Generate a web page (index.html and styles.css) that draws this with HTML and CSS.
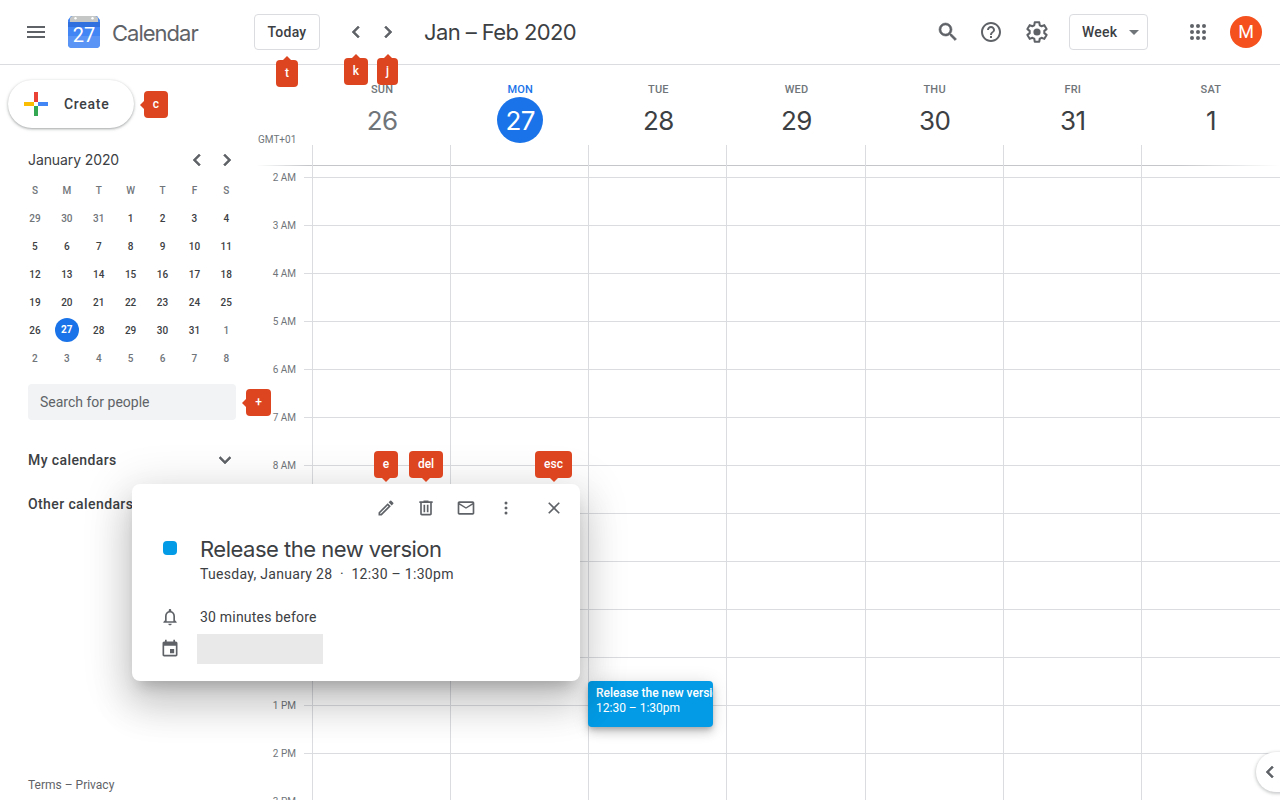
FILE: index.html
```html
<!DOCTYPE html>
<html lang="en">
<head>
    <meta charset="UTF-8">
    <meta name="viewport" content="width=device-width, initial-scale=1.0">
    <title>Calendar - Week of January 26, 2020</title>
    <link rel="stylesheet" href="styles.css">
</head>
<body>
    <header class="topbar">
        <div class="brand">
            <svg class="icon" viewBox="0 0 24 24"><path d="M3 18h18v-2H3v2zm0-5h18v-2H3v2zm0-7v2h18V6H3z"/></svg>
            <svg class="logo" viewBox="0 0 32 32">
                <path d="M3 0h26l3 4v24a4 4 0 0 1-4 4H4a4 4 0 0 1-4-4V4z" fill="#4285f4"/>
                <path d="M2 3a3 3 0 0 1 3-3h22a3 3 0 0 1 3 3v3H2z" fill="#c4c7c5"/>
                <path d="M0 6h32v5H0z" fill="#2f6fde"/>
                <path d="M0 20h32v8a4 4 0 0 1-4 4H4a4 4 0 0 1-4-4z" fill="#5a95f5"/>
                <circle cx="7.500" cy="2.200" r="1.200" fill="#fff"/>
                <circle cx="24.500" cy="2.200" r="1.200" fill="#fff"/>
                <text x="16" y="26" text-anchor="middle" class="logo-num">27</text>
            </svg>
            <span class="brand-name">Calendar</span>
        </div>
        <button class="btn btn-today">Today</button>
        <svg class="icon chev nav-prev" viewBox="0 0 24 24"><path d="M15.410 7.410L14 6l-6 6 6 6 1.410-1.410L10.830 12z"/></svg>
        <svg class="icon chev nav-next" viewBox="0 0 24 24"><path d="M10 6L8.590 7.410 13.170 12l-4.580 4.590L10 18l6-6z"/></svg>
        <h1 class="range">Jan – Feb 2020</h1>
        <div class="tools">
            <svg class="icon chev" viewBox="0 0 24 24"><path d="M15.500 14h-.79l-.28-.27A6.471 6.471 0 0 0 16 9.500 6.500 6.500 0 1 0 9.500 16c1.610 0 3.090-.59 4.230-1.570l.27.28v.79l5 4.990L20.490 19l-4.990-5zm-6 0C7.010 14 5 11.990 5 9.500S7.010 5 9.500 5 14 7.010 14 9.500 11.990 14 9.500 14z"/></svg>
            <svg class="icon tool-help" viewBox="0 0 24 24"><path d="M11 18h2v-2h-2v2zm1-16C6.480 2 2 6.480 2 12s4.480 10 10 10 10-4.480 10-10S17.520 2 12 2zm0 18c-4.410 0-8-3.590-8-8s3.590-8 8-8 8 3.590 8 8-3.590 8-8 8zm0-14c-2.210 0-4 1.790-4 4h2c0-1.100.9-2 2-2s2 .9 2 2c0 2-3 1.750-3 5h2c0-2.250 3-2.500 3-5 0-2.210-1.790-4-4-4z"/></svg>
            <svg class="icon tool-gear" viewBox="2.450 2 20 20">
                <path class="gear-line" d="M18.500 12.900c.05-.3.07-.6.07-.9s-.02-.6-.07-.9l1.950-1.520-1.900-3.280-2.300.93c-.48-.37-1-.67-1.560-.9L14.350 3.900h-3.800l-.34 2.430c-.56.23-1.080.53-1.560.9l-2.300-.93-1.900 3.280 1.950 1.520c-.05.3-.07.6-.07.9s.02.6.07.9l-1.950 1.520 1.900 3.280 2.300-.93c.48.37 1 .67 1.560.9l.34 2.430h3.800l.34-2.430c.56-.23 1.080-.53 1.560-.9l2.300.93 1.900-3.280z"/>
                <circle cx="12.450" cy="12" r="3"/>
            </svg>
            <button class="btn btn-week">Week<span class="caret"></span></button>
            <svg class="icon tool-apps" viewBox="0 0 24 24">
                <circle cx="6" cy="6" r="2"/><circle cx="12" cy="6" r="2"/><circle cx="18" cy="6" r="2"/>
                <circle cx="6" cy="12" r="2"/><circle cx="12" cy="12" r="2"/><circle cx="18" cy="12" r="2"/>
                <circle cx="6" cy="18" r="2"/><circle cx="12" cy="18" r="2"/><circle cx="18" cy="18" r="2"/>
            </svg>
            <div class="avatar">M</div>
        </div>
    </header>

    <main class="main">
        <aside class="sidebar">
            <button class="create">
                <svg class="create-plus" viewBox="0 0 24 24">
                    <path d="M10 0h4v10h-4z" fill="#ea4335"/>
                    <path d="M14 10h10v4H14z" fill="#4285f4"/>
                    <path d="M10 14h4v10h-4z" fill="#34a853"/>
                    <path d="M0 10h10v4H0z" fill="#fbbc04"/>
                </svg>
                Create
            </button>

            <div class="mini-head">
                <span class="mini-title">January 2020</span>
                <svg class="icon chev mini-nav" viewBox="0 0 24 24"><path d="M15.410 7.410L14 6l-6 6 6 6 1.410-1.410L10.830 12z"/></svg>
                <svg class="icon chev mini-nav mini-next" viewBox="0 0 24 24"><path d="M10 6L8.590 7.410 13.170 12l-4.580 4.590L10 18l6-6z"/></svg>
            </div>
            <div class="mini-grid">
                <span class="wd">S</span><span class="wd">M</span><span class="wd">T</span><span class="wd">W</span><span class="wd">T</span><span class="wd">F</span><span class="wd">S</span>
                <span class="out">29</span><span class="out">30</span><span class="out">31</span><span>1</span><span>2</span><span>3</span><span>4</span>
                <span>5</span><span>6</span><span>7</span><span>8</span><span>9</span><span>10</span><span>11</span>
                <span>12</span><span>13</span><span>14</span><span>15</span><span>16</span><span>17</span><span>18</span>
                <span>19</span><span>20</span><span>21</span><span>22</span><span>23</span><span>24</span><span>25</span>
                <span>26</span><span class="today"><b>27</b></span><span>28</span><span>29</span><span>30</span><span>31</span><span class="out">1</span>
                <span class="out">2</span><span class="out">3</span><span class="out">4</span><span class="out">5</span><span class="out">6</span><span class="out">7</span><span class="out">8</span>
            </div>

            <div class="people">Search for people</div>

            <div class="cal-section">
                <span>My calendars</span>
                <svg class="icon chev cal-toggle" viewBox="0 0 24 24"><path d="M16.590 8.590L12 13.170 7.410 8.590 6 10l6 6 6-6z"/></svg>
            </div>
            <div class="cal-section cal-other">
                <span>Other calendars</span>
            </div>

            <div class="terms">Terms – Privacy</div>
        </aside>

        <section class="week">
            <div class="week-head">
                <span class="gmt">GMT+01</span>
                <div class="day past"><span class="day-name">SUN</span><span class="day-num">26</span></div>
                <div class="day current"><span class="day-name">MON</span><span class="day-num">27</span></div>
                <div class="day"><span class="day-name">TUE</span><span class="day-num">28</span></div>
                <div class="day"><span class="day-name">WED</span><span class="day-num">29</span></div>
                <div class="day"><span class="day-name">THU</span><span class="day-num">30</span></div>
                <div class="day"><span class="day-name">FRI</span><span class="day-num">31</span></div>
                <div class="day"><span class="day-name">SAT</span><span class="day-num">1</span></div>
            </div>
            <div class="week-body">
                <div class="col-lines">
                    <i></i><i></i><i></i><i></i><i></i><i></i><i></i>
                </div>
                <div class="allday"></div>
                <div class="first-gap hour"><span>2 AM</span></div>
                <div class="hour"><span>3 AM</span></div>
                <div class="hour"><span>4 AM</span></div>
                <div class="hour"><span>5 AM</span></div>
                <div class="hour"><span>6 AM</span></div>
                <div class="hour"><span>7 AM</span></div>
                <div class="hour"><span>8 AM</span></div>
                <div class="hour"></div>
                <div class="hour"></div>
                <div class="hour"></div>
                <div class="hour"></div>
                <div class="hour"><span>1 PM</span></div>
                <div class="hour"><span>2 PM</span></div>
                <div class="hour"><span>3 PM</span></div>
            </div>
        </section>
    </main>

    <div class="event">
        <strong>Release the new version</strong>
        <span>12:30 – 1:30pm</span>
    </div>

    <div class="side-toggle">
        <svg class="icon chev" viewBox="0 0 24 24"><path d="M15.410 7.410L14 6l-6 6 6 6 1.410-1.410L10.830 12z"/></svg>
    </div>

    <div class="popup">
        <div class="popup-tools">
            <svg class="icon" viewBox="0 0 24 24"><path d="M3 17.250V21h3.750L17.810 9.940l-3.750-3.750L3 17.250zM5.920 19H5v-.92l9.060-9.060.92.92L5.920 19zM20.710 7.040a.996.996 0 0 0 0-1.410l-2.340-2.340a.996.996 0 0 0-1.410 0l-1.830 1.830 3.750 3.750 1.830-1.830z"/></svg>
            <svg class="icon" viewBox="0 0 24 24"><path d="M15 4V3H9v1H4v2h1v13c0 1.100.9 2 2 2h10c1.100 0 2-.9 2-2V6h1V4h-5zm2 15H7V6h10v13zM9 8h2v9H9V8zm4 0h2v9h-2V8z"/></svg>
            <svg class="icon" viewBox="0 0 24 24"><path d="M22 6c0-1.100-.9-2-2-2H4c-1.100 0-2 .9-2 2v12c0 1.100.9 2 2 2h16c1.100 0 2-.9 2-2V6zm-2 0l-8 5-8-5h16zm0 12H4V8l8 5 8-5v10z"/></svg>
            <svg class="icon" viewBox="0 0 24 24"><circle cx="12" cy="6" r="1.800"/><circle cx="12" cy="12" r="1.800"/><circle cx="12" cy="18" r="1.800"/></svg>
            <svg class="icon popup-close" viewBox="0 0 24 24"><path d="M19 6.410L17.590 5 12 10.590 6.410 5 5 6.410 10.590 12 5 17.590 6.410 19 12 13.410 17.590 19 19 17.590 13.410 12z"/></svg>
        </div>
        <div class="popup-row popup-title-row">
            <div class="popup-side"><span class="color-dot"></span></div>
            <div>
                <div class="popup-title">Release the new version</div>
                <div class="popup-when">Tuesday, January 28 &nbsp;·&nbsp; 12:30 – 1:30pm</div>
            </div>
        </div>
        <div class="popup-row popup-remind">
            <div class="popup-side">
                <svg class="icon" viewBox="0 0 24 24"><path d="M12 22c1.100 0 2-.9 2-2h-4c0 1.100.9 2 2 2zm6-6v-5c0-3.070-1.630-5.640-4.500-6.320V4c0-.83-.67-1.500-1.500-1.500s-1.500.67-1.500 1.500v.68C7.640 5.360 6 7.920 6 11v5l-2 2v1h16v-1l-2-2zm-2 1H8v-6c0-2.480 1.510-4.500 4-4.500s4 2.020 4 4.500v6z"/></svg>
            </div>
            <span>30 minutes before</span>
        </div>
        <div class="popup-row popup-cal">
            <div class="popup-side">
                <svg class="icon" viewBox="0 0 24 24"><path d="M17 12h-5v5h5v-5zM16 1v2H8V1H6v2H5c-1.110 0-1.990.9-1.990 2L3 19c0 1.100.89 2 2 2h14c1.100 0 2-.9 2-2V5c0-1.100-.9-2-2-2h-1V1h-2zm3 18H5V8h14v11z"/></svg>
            </div>
            <div class="redacted"></div>
        </div>
    </div>

    <!-- keyboard shortcut hints -->
    <span class="key up key-t">t</span>
    <span class="key up key-k">k</span>
    <span class="key up key-j">j</span>
    <span class="key left key-c">c</span>
    <span class="key left key-plus">+</span>
    <span class="key down key-e">e</span>
    <span class="key down key-del">del</span>
    <span class="key down key-esc">esc</span>
</body>
</html>
```

FILE: styles.css
```css
* {
    box-sizing: border-box;
}
html, body {
    margin: 0;
    height: 800px;
    overflow: hidden;
}
body {
    position: relative;
    font-family: Roboto, "Liberation Sans", sans-serif;
    font-size: 14px;
    color: #3c4043;
    background: #fff;
}
.icon {
    display: block;
    flex: none;
    width: 24px;
    height: 24px;
    fill: #5f6368;
}
.chev {
    stroke: #5f6368;
    stroke-width: .6;
}

/* top bar */
.topbar {
    display: flex;
    align-items: center;
    height: 65px;
    padding: 0 18px 0 24px;
    border-bottom: 1px solid #dadce0;
}
.brand {
    display: flex;
    align-items: center;
    width: 230px;
}
.logo {
    display: block;
    width: 32px;
    height: 32px;
    margin-left: 20px;
}
.logo-num {
    font-family: Roboto, sans-serif;
    font-size: 20px;
    fill: #fff;
}
.brand-name {
    margin: 1px 0 0 12px;
    font-family: Inter, sans-serif;
    font-size: 22px;
    letter-spacing: -1px;
    color: #5f6368;
}
.btn {
    height: 36px;
    background: #fff;
    border: 1px solid #dadce0;
    border-radius: 4px;
    font-family: Roboto, sans-serif;
    font-size: 14px;
    font-weight: 500;
    letter-spacing: .25px;
    color: #3c4043;
}
.btn-today {
    width: 66px;
    padding: 0;
}
.nav-prev {
    margin-left: 24px;
}
.nav-next {
    margin-left: 8px;
}
.range {
    margin: -1px 0 0 24px;
    font-family: Inter, sans-serif;
    font-size: 22px;
    font-weight: 400;
    letter-spacing: -.6px;
    color: #3c4043;
}
.tools {
    display: flex;
    align-items: center;
    margin-left: auto;
}
.tool-help {
    margin-left: 19px;
}
.tool-gear {
    margin-left: 22px;
}
.gear-line {
    fill: none;
    stroke: #5f6368;
    stroke-width: 1.700;
    stroke-linejoin: round;
}
.btn-week {
    display: flex;
    align-items: center;
    width: 79px;
    margin-left: 20px;
    padding: 0 0 0 12px;
}
.caret {
    margin-left: 12px;
    border-top: 5px solid #70757a;
    border-left: 5px solid transparent;
    border-right: 5px solid transparent;
}
.tool-apps {
    margin-left: 38px;
}
.avatar {
    width: 32px;
    height: 32px;
    margin-left: 20px;
    border-radius: 50%;
    background: #f4511e;
    color: #fff;
    font-size: 18px;
    line-height: 32px;
    text-align: center;
}

/* layout */
.main {
    display: flex;
    height: 735px;
    overflow: hidden;
}
.sidebar {
    display: flex;
    flex-direction: column;
    flex: none;
    width: 256px;
    padding: 15px 20px 7px 28px;
}
.create {
    display: flex;
    align-items: center;
    width: 126px;
    height: 48px;
    margin-left: -20px;
    padding: 0 0 0 16px;
    background: #fff;
    border: 0;
    border-radius: 24px;
    box-shadow: 0 1px 2px 0 rgba(60, 64, 67, .3), 0 1px 3px 1px rgba(60, 64, 67, .15);
    font-family: Roboto, sans-serif;
    font-size: 14px;
    font-weight: 500;
    letter-spacing: .7px;
    color: #3c4043;
}
.create-plus {
    width: 24px;
    height: 24px;
    margin-right: 16px;
}

/* mini month */
.mini-head {
    display: flex;
    align-items: center;
    height: 24px;
    margin-top: 20px;
}
.mini-title {
    flex: 1;
    margin-top: -2px;
    font-family: Inter, sans-serif;
    font-size: 14px;
    letter-spacing: -.1px;
}
.mini-next {
    margin: 0 -3px 0 6px;
}
.mini-grid {
    display: grid;
    grid-template-columns: repeat(7, 31.900px);
    grid-auto-rows: 28px;
    margin: 4px 0 0 -9px;
    font-size: 10px;
    font-weight: 500;
    color: #3c4043;
}
.mini-grid span {
    display: flex;
    align-items: center;
    justify-content: center;
}
.mini-grid .wd, .mini-grid .out {
    color: #70757a;
}
.mini-grid b {
    width: 24px;
    height: 24px;
    border-radius: 50%;
    background: #1a73e8;
    color: #fff;
    font-weight: 700;
    line-height: 24px;
    text-align: center;
}
.people {
    height: 36px;
    margin-top: 12px;
    padding-left: 12px;
    background: #f1f3f4;
    border-radius: 4px;
    line-height: 36px;
    color: #5f6368;
}
.cal-section {
    display: flex;
    align-items: center;
    justify-content: space-between;
    height: 24px;
    margin-top: 28px;
    font-weight: 500;
    letter-spacing: .4px;
    color: #3c4043;
}
.cal-toggle {
    margin-right: -1px;
}
.cal-other {
    margin-top: 20px;
}
.terms {
    margin-top: auto;
    font-size: 12px;
    line-height: 16px;
    color: #5f6368;
}

/* week */
.week {
    flex: 1;
}
.week-head {
    position: relative;
    display: grid;
    grid-template-columns: repeat(7, 138.150px);
    height: 80px;
    margin-left: 57px;
}
.gmt {
    position: absolute;
    left: -55px;
    top: 69px;
    font-size: 10px;
    line-height: 12px;
    color: #70757a;
}
.day {
    display: flex;
    flex-direction: column;
    align-items: center;
    padding-top: 18px;
}
.day-name {
    font-size: 11px;
    font-weight: 500;
    line-height: 14px;
    letter-spacing: .2px;
    color: #70757a;
}
.day-num {
    width: 46px;
    height: 46px;
    border-radius: 50%;
    font-family: Inter, sans-serif;
    font-size: 26px;
    letter-spacing: -.6px;
    line-height: 47px;
    text-align: center;
    color: #3c4043;
}
.past .day-num {
    color: #70757a;
}
.current .day-name {
    color: #1a73e8;
}
.current .day-num {
    background: #1a73e8;
    color: #fff;
}
.week-body {
    position: relative;
    padding-top: 20px;
}
.col-lines {
    position: absolute;
    left: 56px;
    top: 0;
    height: 700px;
    display: grid;
    grid-template-columns: repeat(7, 138.150px);
}
.col-lines i {
    border-left: 1px solid #dadce0;
}
.allday {
    height: 1px;
    background: linear-gradient(to right, #fff 0, #c4c6c9 5%, #c4c6c9 90%, #fff 100%);
}
.hour {
    position: relative;
    height: 48px;
    margin-left: 48px;
    border-bottom: 1px solid #dadce0;
}
.first-gap {
    height: 12px;
}
.hour span {
    position: absolute;
    right: 100%;
    bottom: -8px;
    width: 48px;
    padding-right: 8px;
    font-size: 10px;
    line-height: 14px;
    text-align: right;
    color: #70757a;
}

/* stuff over the grid */
.event {
    position: absolute;
    left: 588px;
    top: 681px;
    width: 125px;
    height: 46px;
    padding: 5px 0 0 8px;
    overflow: hidden;
    background: #039be5;
    border-radius: 4px;
    box-shadow: 0 6px 10px 0 rgba(0, 0, 0, .14), 0 1px 18px 0 rgba(0, 0, 0, .12), 0 3px 5px -1px rgba(0, 0, 0, .2);
    font-size: 12px;
    line-height: 15px;
    color: #fff;
    white-space: nowrap;
}
.event strong, .event span {
    display: block;
}
.event strong {
    font-weight: 500;
}
.side-toggle {
    position: absolute;
    left: 1256px;
    top: 752px;
    width: 48px;
    height: 40px;
    padding: 8px 0 0 2px;
    background: #fff;
    border-radius: 24px;
    box-shadow: 0 1px 3px 1px rgba(60, 64, 67, .25);
}
.popup {
    position: absolute;
    left: 132px;
    top: 484px;
    width: 448px;
    height: 197px;
    background: #fff;
    border-radius: 8px;
    box-shadow: 0 24px 38px 3px rgba(0, 0, 0, .14), 0 9px 46px 8px rgba(0, 0, 0, .12), 0 11px 15px -7px rgba(0, 0, 0, .2);
}
.popup-tools {
    display: flex;
    justify-content: flex-end;
    align-items: center;
    height: 40px;
    padding: 8px 16px 0 0;
}
.popup-tools .icon {
    width: 20px;
    height: 20px;
    margin-left: 20px;
}
.popup-tools .popup-close {
    margin-left: 28px;
}
.popup-row {
    display: flex;
}
.popup-side {
    display: flex;
    justify-content: center;
    flex: none;
    width: 76px;
    margin-right: -8px;
}
.popup-side .icon {
    width: 20px;
    height: 20px;
}
.popup-title-row {
    margin-top: 10px;
}
.color-dot {
    width: 14px;
    height: 14px;
    margin-top: 7px;
    background: #039be5;
    border-radius: 4px;
}
.popup-title {
    font-family: Inter, sans-serif;
    font-size: 22px;
    letter-spacing: -.5px;
    line-height: 30px;
    color: #3c4043;
}
.popup-when {
    line-height: 20px;
    letter-spacing: .3px;
}
.popup-remind {
    align-items: center;
    margin-top: 23px;
    height: 20px;
    letter-spacing: .2px;
}
.popup-cal {
    align-items: center;
    margin-top: 7px;
}
.redacted {
    width: 126px;
    height: 30px;
    margin-left: -3px;
    background: #e9e9e9;
}

/* shortcut badges */
.key {
    position: absolute;
    height: 27px;
    background: #dc4520;
    border-radius: 4px;
    font-size: 12px;
    font-weight: 500;
    line-height: 27px;
    text-align: center;
    color: #fff;
}
.key::after {
    content: "";
    position: absolute;
    width: 0;
    height: 0;
    border: 4px solid transparent;
}
.key.up::after {
    left: 50%;
    top: -8px;
    margin-left: -4px;
    border-bottom-color: #dc4520;
}
.key.down::after {
    left: 50%;
    bottom: -8px;
    margin-left: -4px;
    border-top-color: #dc4520;
}
.key.left::after {
    left: -8px;
    top: 50%;
    margin-top: -4px;
    border-right-color: #dc4520;
}
.key-t { left: 276px; top: 60px; width: 22px; }
.key-k { left: 344px; top: 58px; width: 24px; }
.key-j { left: 377px; top: 58px; width: 21px; }
.key-c { left: 144px; top: 91px; width: 24px; }
.key-plus { left: 246px; top: 389px; width: 25px; }
.key-e { left: 374px; top: 451px; width: 24px; }
.key-del { left: 409px; top: 451px; width: 34px; }
.key-esc { left: 535px; top: 451px; width: 37px; }
```
